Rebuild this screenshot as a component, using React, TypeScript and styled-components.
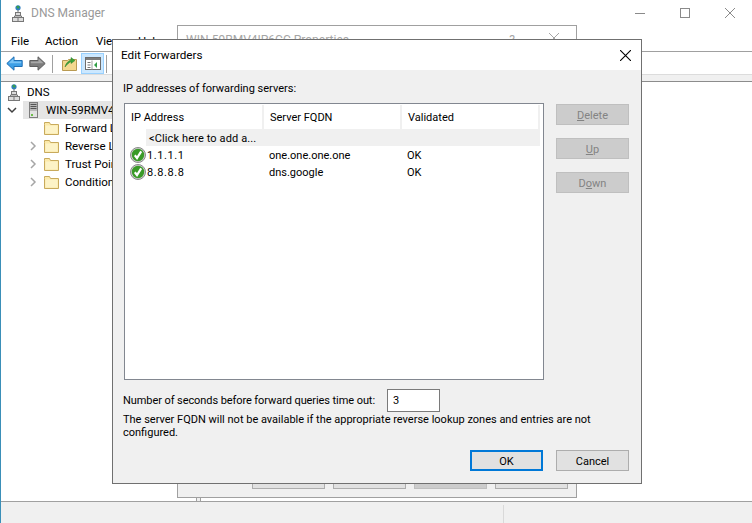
import React from "react";
import styled, { createGlobalStyle } from "styled-components";

const Global = createGlobalStyle`
  html, body { margin: 0; padding: 0; background: #fff; }
  * { box-sizing: border-box; }
  #root { width: 752px; height: 523px; overflow: hidden; }
`;

const font = `Roboto, "Liberation Sans", sans-serif`;

const Desktop = styled.div`
  position: relative;
  width: 752px;
  height: 523px;
  overflow: hidden;
  background: #fff;
  font-family: ${font};
  font-size: 11px;
  color: #000;
`;

const MainWindow = styled.div`
  display: flex;
  flex-direction: column;
  height: 100%;
  border-left: 1px solid #3a8fb8;
`;

const TitleBar = styled.div`
  display: flex;
  align-items: center;
  height: 26px;
  padding-left: 11px;
  gap: 7px;
  color: #999;
  font-size: 12px;
`;

const TitleText = styled.span`
  flex: 1;
`;

const WindowControls = styled.div`
  display: flex;
  align-items: center;
  margin-right: 17px;
  gap: 35px;
`;

const MenuBar = styled.div`
  display: flex;
  align-items: center;
  height: 26px;
  padding: 4px 0 0 10px;
  border-bottom: 1px solid #a0a0a0;
  font-size: 11.5px;
`;

const MenuItem = styled.span<{ $w: number }>`
  width: ${(p) => p.$w}px;
`;

const ToolBar = styled.div`
  display: flex;
  align-items: center;
  height: 22px;
  padding: 1px 0 0 5px;
`;

const ToolIcon = styled.span<{ $ml?: number }>`
  display: flex;
  margin-left: ${(p) => p.$ml ?? 0}px;
`;

const ToolSep = styled.span<{ $ml: number }>`
  width: 1px;
  height: 18px;
  margin-left: ${(p) => p.$ml}px;
  background: #a0a0a0;
`;

const ToolActive = styled.span`
  display: flex;
  align-items: center;
  justify-content: center;
  width: 23px;
  height: 21px;
  margin-left: 4px;
  background: #cce8ff;
  border: 1px solid #99d1ff;
`;

const Band = styled.div`
  height: 8px;
  background: #f0f0f0;
  border-top: 1px solid #dcdcdc;
  border-bottom: 1px solid #8c8c8c;
  flex: none;
`;

const Panes = styled.div`
  flex: 1;
  display: flex;
  min-height: 0;
`;

const TreePane = styled.div`
  width: 196px;
  padding-top: 1px;
  border-right: 1px solid #a0a0a0;
  font-size: 11.5px;
`;

const ResultPane = styled.div`
  flex: 1;
  border-left: 1px solid #a0a0a0;
`;

const PaneGap = styled.div`
  width: 3px;
  background: #f0f0f0;
`;

const TreeRow = styled.div`
  display: flex;
  align-items: center;
  height: 18px;
  white-space: nowrap;
`;

const Gutter = styled.span<{ $w: number }>`
  display: flex;
  align-items: center;
  justify-content: center;
  flex: none;
  width: ${(p) => p.$w}px;
`;

const ExpanderSlot = styled.span`
  display: flex;
  margin-left: 21px;
`;

const Selection = styled.div`
  flex: 1;
  display: flex;
  align-items: center;
  height: 18px;
  padding-left: 6px;
  background: #e5e5e5;
`;

const TreeLabel = styled.span<{ $ml: number }>`
  margin-left: ${(p) => p.$ml}px;
`;

const StatusBar = styled.div`
  height: 22px;
  flex: none;
  display: flex;
  justify-content: flex-end;
  background: #f0f0f0;
  border-top: 1px solid #a0a0a0;
`;

const StatusCell = styled.div`
  width: 249px;
  margin-top: 3px;
  border-left: 1px solid #d9d9d9;
`;

const Dialog = styled.div<{ $x: number; $y: number; $w: number; $h: number; $border: string }>`
  position: absolute;
  left: ${(p) => p.$x}px;
  top: ${(p) => p.$y}px;
  width: ${(p) => p.$w}px;
  height: ${(p) => p.$h}px;
  border: 1px solid ${(p) => p.$border};
  display: flex;
  flex-direction: column;
  background: #f0f0f0;
`;

const BackTitle = styled.div`
  height: 32px;
  background: #fff;
  display: flex;
  align-items: flex-start;
  justify-content: space-between;
  padding: 7px 17px 0 8px;
  color: #a6a6a6;
  font-size: 12px;
  white-space: nowrap;
`;

const BackControls = styled.span`
  display: flex;
  gap: 34px;
`;

const BackFooter = styled.div`
  margin-top: auto;
  display: flex;
  justify-content: flex-end;
  gap: 8px;
  padding: 0 8px 8px 0;
`;

const BackButton = styled.div<{ $disabled?: boolean }>`
  width: 73px;
  height: 22px;
  display: flex;
  align-items: center;
  justify-content: center;
  background: ${(p) => (p.$disabled ? "#cccccc" : "#e1e1e1")};
  border: 1px solid ${(p) => (p.$disabled ? "#bfbfbf" : "#adadad")};
  color: ${(p) => (p.$disabled ? "#838383" : "#000")};
`;

const EditTitle = styled.div`
  height: 30px;
  flex: none;
  display: flex;
  align-items: center;
  justify-content: space-between;
  background: #fff;
  padding: 0 10px 0 8px;
  font-size: 11.7px;
`;

const EditBody = styled.div`
  flex: 1;
  display: flex;
  flex-direction: column;
  padding: 10px 12px 12px 11px;
  min-height: 0;
`;

const Caption = styled.div`
  height: 15px;
  padding-top: 1px;
  margin-left: -1px;
  line-height: 15px;
  margin-bottom: 8px;
`;

const ListArea = styled.div`
  display: flex;
  gap: 12px;
  height: 277px;
  flex: none;
`;

const ListBox = styled.div`
  width: 420px;
  background: #fff;
  border: 1px solid #828790;
  padding: 1px 3px 0 0;
  display: flex;
  flex-direction: column;
`;

const HeaderRow = styled.div`
  display: grid;
  grid-template-columns: 139px 138px 138px;
  height: 24px;
`;

const HeaderCell = styled.div`
  display: flex;
  align-items: center;
  padding: 1px 0 0 6px;
  border-right: 2px solid #f0f0f0;
`;

const AddRow = styled.div`
  height: 17px;
  margin-left: 21px;
  padding: 1px 0 0 3px;
  display: flex;
  align-items: center;
  background: #f0f0f0;
  letter-spacing: 0.12px;
`;

const DataRow = styled.div`
  display: grid;
  grid-template-columns: 139px 138px 138px;
  height: 17px;
  align-items: center;
`;

const IpCell = styled.div`
  display: flex;
  align-items: center;
  padding-left: 5px;
  gap: 1px;
  letter-spacing: 0.6px;
`;

const DataCell = styled.div`
  padding: 1px 0 0 5px;
`;

const IpText = styled.span`
  padding-top: 1px;
`;

const SideButtons = styled.div`
  display: flex;
  flex-direction: column;
  gap: 13px;
  padding-top: 1px;
`;

const SideButton = styled.div`
  width: 73px;
  height: 21px;
  display: flex;
  align-items: center;
  justify-content: center;
  padding-top: 1px;
  background: #cccccc;
  border: 1px solid #bfbfbf;
  color: #838383;
`;

const Key = styled.span`
  text-decoration: underline;
`;

const TimeoutRow = styled.div`
  display: flex;
  align-items: center;
  margin: 9px 0 0 -1px;
  height: 23px;
  letter-spacing: -0.08px;
`;

const TimeoutInput = styled.div`
  width: 53px;
  height: 23px;
  margin-left: 12px;
  padding-left: 5px;
  display: flex;
  align-items: center;
  background: #fff;
  border: 1px solid #7a7a7a;
`;

const Note = styled.div`
  margin: 1px 0 0 -1px;
  width: 480px;
  line-height: 13px;
`;

const Footer = styled.div`
  margin-top: auto;
  display: flex;
  justify-content: flex-end;
  gap: 13px;
`;

const FooterButton = styled.div<{ $primary?: boolean }>`
  width: 73px;
  height: 21px;
  display: flex;
  align-items: center;
  justify-content: center;
  padding-top: 1px;
  background: #e1e1e1;
  border: ${(p) => (p.$primary ? "2px solid #0078d7" : "1px solid #adadad")};
`;

const DnsIcon = () => (
  <svg width="12" height="17" viewBox="0 0 12 17">
    <circle cx="6" cy="2.8" r="2.6" fill="#2f7fc1" />
    <path d="M4.2 1.8 6 .6l1.8 1.6L6 4z" fill="#3aa04a" />
    <path d="M6 5v3" stroke="#777" />
    <rect x="3.5" y="7.5" width="5" height="3" fill="#dcdcdc" stroke="#777" />
    <path d="M2.5 12v-1h7v1" stroke="#777" fill="none" />
    <rect x="0.5" y="12.5" width="11" height="4" fill="#dcdcdc" stroke="#777" />
    <path d="M6 12.5v4" stroke="#777" />
  </svg>
);

const ServerIcon = () => (
  <svg width="9" height="16" viewBox="0 0 9 16">
    <rect x="0.5" y="0.5" width="8" height="15" fill="#b9b9b9" stroke="#7d7d7d" />
    <path d="M1.5 2.5h6M1.5 4.5h6M1.5 6.5h6" stroke="#555" />
    <rect x="1" y="9" width="7" height="6" fill="#e2e2e2" />
    <rect x="2" y="12" width="2" height="2" fill="#6cbf4a" />
  </svg>
);

const FolderIcon = () => (
  <svg width="15" height="14" viewBox="0 0 15 14">
    <path d="M0.5 3.5V1.5h5l1 2h8v10h-14z" fill="#fbe9a9" stroke="#c8aa5c" />
    <path d="M1.5 4.5h12v8h-12z" fill="#fdf3c7" />
  </svg>
);

const ChevronDown = () => (
  <svg width="10" height="7" viewBox="0 0 10 7">
    <path d="M1 1l4 4 4-4" stroke="#404040" strokeWidth="1.5" fill="none" />
  </svg>
);

const ChevronRight = () => (
  <svg width="7" height="10" viewBox="0 0 7 10">
    <path d="M1 1l4 4-4 4" stroke="#a6a6a6" strokeWidth="1.5" fill="none" />
  </svg>
);

const ArrowIcon = ({ flip, fill, light, stroke }: { flip?: boolean; fill: string; light: string; stroke: string }) => (
  <svg width="17" height="15" viewBox="0 0 17 15" style={{ transform: flip ? "scaleX(-1)" : undefined }}>
    <path d="M0.8 7.5 8 0.8v3.7h8.2v6H8v3.7z" fill={fill} stroke={stroke} />
    <path d="M2.5 7.3 7.5 2.6v2.9h7.7v1.8z" fill={light} />
  </svg>
);

const FolderUpIcon = () => (
  <svg width="15" height="15" viewBox="0 0 15 15">
    <path d="M0.5 4.5h5l1-1h8v11h-14z" fill="#f3d88f" stroke="#b99a52" />
    <path d="M3 11c1-4 3-6 6-7V1.5l4 3-4 3V5.5c-2 1-4 3-6 5.5z" fill="#39a339" stroke="#2c7f2c" strokeWidth="0.5" />
  </svg>
);

const PaneIcon = () => (
  <svg width="16" height="13" viewBox="0 0 16 13">
    <rect x="0.5" y="0.5" width="15" height="12" fill="#fff" stroke="#6d6d6d" />
    <rect x="1" y="1" width="14" height="2" fill="#7d7d7d" />
    <path d="M2.5 5h3v1h-3zM2.5 7.5h3v1h-3zM2.5 10h3v1h-3z" fill="#777" />
    <path d="M7 3.5v9" stroke="#a0a0a0" />
    <path d="M12 5v6L9 8z" fill="#2f9e44" />
  </svg>
);

const CheckIcon = () => (
  <svg width="16" height="16" viewBox="0 0 16 16">
    <circle cx="8" cy="8" r="7.5" fill="#d0d0d0" stroke="#8a8a8a" />
    <circle cx="8" cy="8" r="6.2" fill="#3a9a28" />
    <path d="M4.8 8.2 7 11l4.2-6.6" stroke="#fff" strokeWidth="2.2" fill="none" />
  </svg>
);

const CloseGlyph = ({ size, color }: { size: number; color: string }) => (
  <svg width={size} height={size} viewBox="0 0 10 10">
    <path d="M0 0l10 10M10 0 0 10" stroke={color} strokeWidth="1" fill="none" />
  </svg>
);

const MinGlyph = () => (
  <svg width="10" height="10" viewBox="0 0 10 10">
    <path d="M0 5.5h10" stroke="#8a8a8a" />
  </svg>
);

const MaxGlyph = () => (
  <svg width="10" height="10" viewBox="0 0 10 10">
    <rect x="0.5" y="0.5" width="9" height="9" fill="none" stroke="#8a8a8a" />
  </svg>
);

const tree = [
  { label: "Forward Lookup Zones", exp: false },
  { label: "Reverse Lookup Zones", exp: true },
  { label: "Trust Points", exp: true },
  { label: "Conditional Forwarders", exp: true },
];

const servers = [
  { ip: "1.1.1.1", fqdn: "one.one.one.one", state: "OK" },
  { ip: "8.8.8.8", fqdn: "dns.google", state: "OK" },
];

export default function App() {
  return (
    <Desktop>
      <Global />
      <MainWindow>
        <TitleBar>
          <DnsIcon />
          <TitleText>DNS Manager</TitleText>
          <WindowControls>
            <MinGlyph />
            <MaxGlyph />
            <CloseGlyph size={10} color="#8a8a8a" />
          </WindowControls>
        </TitleBar>
        <MenuBar>
          <MenuItem $w={34}>File</MenuItem>
          <MenuItem $w={51}>Action</MenuItem>
          <MenuItem $w={42}>View</MenuItem>
          <MenuItem $w={30}>Help</MenuItem>
        </MenuBar>
        <ToolBar>
          <ToolIcon><ArrowIcon fill="#3d9fe6" light="#7cc4f5" stroke="#1f6fb5" /></ToolIcon>
          <ToolIcon $ml={6}><ArrowIcon flip fill="#7d7d7d" light="#a8a8a8" stroke="#5f5f5f" /></ToolIcon>
          <ToolSep $ml={6} />
          <ToolIcon $ml={9}><FolderUpIcon /></ToolIcon>
          <ToolActive><PaneIcon /></ToolActive>
          <ToolSep $ml={2} />
        </ToolBar>
        <Band />
        <Panes>
          <TreePane>
            <TreeRow>
              <Gutter $w={25}><DnsIcon /></Gutter>
              <TreeLabel $ml={1}>DNS</TreeLabel>
            </TreeRow>
            <TreeRow>
              <Gutter $w={22}><ChevronDown /></Gutter>
              <Selection>
                <ServerIcon />
                <TreeLabel $ml={8}>WIN-59RMV4IP6CC</TreeLabel>
              </Selection>
            </TreeRow>
            {tree.map((t) => (
              <TreeRow key={t.label}>
                <Gutter $w={43}>
                  {t.exp && (
                    <ExpanderSlot>
                      <ChevronRight />
                    </ExpanderSlot>
                  )}
                </Gutter>
                <FolderIcon />
                <TreeLabel $ml={6}>{t.label}</TreeLabel>
              </TreeRow>
            ))}
          </TreePane>
          <PaneGap />
          <ResultPane />
        </Panes>
        <StatusBar>
          <StatusCell />
        </StatusBar>
      </MainWindow>

      <Dialog $x={177} $y={25} $w={400} $h={473} $border="#a0a0a0">
        <BackTitle>
          <span>WIN-59RMV4IP6CC Properties</span>
          <BackControls>
            <span>?</span>
            <CloseGlyph size={10} color="#a6a6a6" />
          </BackControls>
        </BackTitle>
        <BackFooter>
          <BackButton>OK</BackButton>
          <BackButton>Cancel</BackButton>
          <BackButton $disabled>Apply</BackButton>
          <BackButton>Help</BackButton>
        </BackFooter>
      </Dialog>

      <Dialog $x={112} $y={39} $w={530} $h={445} $border="#707070">
        <EditTitle>
          <span>Edit Forwarders</span>
          <CloseGlyph size={11} color="#000" />
        </EditTitle>
        <EditBody>
          <Caption>IP addresses of forwarding servers:</Caption>
          <ListArea>
            <ListBox>
              <HeaderRow>
                <HeaderCell>IP Address</HeaderCell>
                <HeaderCell>Server FQDN</HeaderCell>
                <HeaderCell>Validated</HeaderCell>
              </HeaderRow>
              <AddRow>&lt;Click here to add a...</AddRow>
              {servers.map((s) => (
                <DataRow key={s.ip}>
                  <IpCell>
                    <CheckIcon />
                    <IpText>{s.ip}</IpText>
                  </IpCell>
                  <DataCell>{s.fqdn}</DataCell>
                  <DataCell>{s.state}</DataCell>
                </DataRow>
              ))}
            </ListBox>
            <SideButtons>
              <SideButton><Key>D</Key>elete</SideButton>
              <SideButton><Key>U</Key>p</SideButton>
              <SideButton>D<Key>o</Key>wn</SideButton>
            </SideButtons>
          </ListArea>
          <TimeoutRow>
            Number of seconds before forward queries time out:
            <TimeoutInput>3</TimeoutInput>
          </TimeoutRow>
          <Note>The server FQDN will not be available if the appropriate reverse lookup zones and entries are not configured.</Note>
          <Footer>
            <FooterButton $primary>OK</FooterButton>
            <FooterButton>Cancel</FooterButton>
          </Footer>
        </EditBody>
      </Dialog>
    </Desktop>
  );
}
